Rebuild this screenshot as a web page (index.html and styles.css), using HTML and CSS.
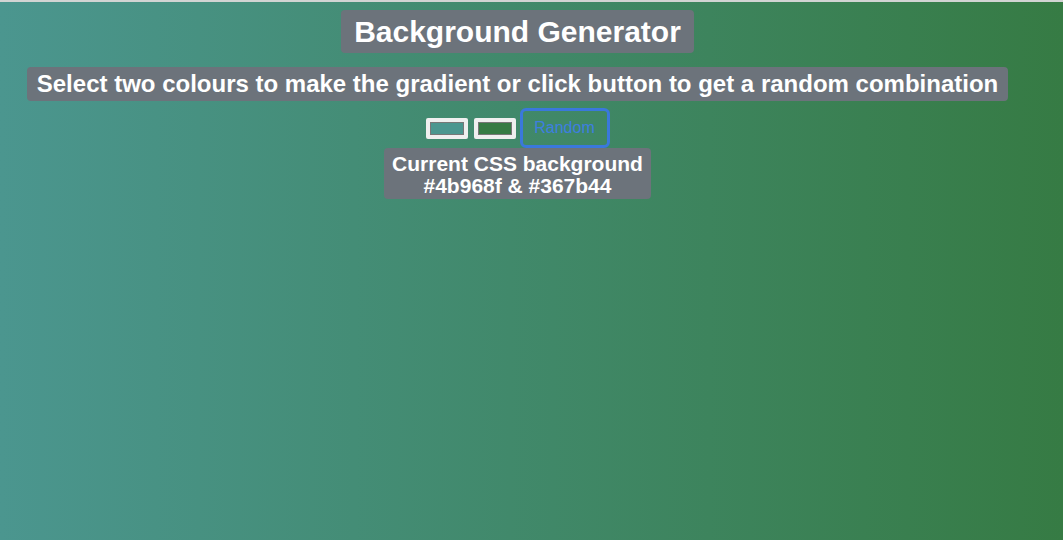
FILE: index.html
```html
<!DOCTYPE html>
<html>
<head>
<meta charset="utf-8">
<link rel="stylesheet" href="styles.css">
</head>
<body>
<div class="topbar"></div>
<main class="page">
  <h1 class="tag title">Background Generator</h1>
  <h3 class="tag subtitle">Select two colours to make the gradient or click button to get a random combination</h3>
  <div class="controls">
    <span class="picker"><span class="swatch swatch-a"></span></span>
    <span class="picker"><span class="swatch swatch-b"></span></span>
    <button class="random">Random</button>
  </div>
  <h3 class="tag current">Current CSS background<br>#4b968f &amp; #367b44</h3>
</main>
</body>
</html>
```
FILE: styles.css
```css
html, body {
  margin: 0;
  height: 100%;
}
body {
  background: linear-gradient(to right, #4b968f, #367b44);
  font-family: "Liberation Sans", Arial, sans-serif;
  overflow: hidden;
}
.topbar {
  height: 2px;
  background: #d2d4d3;
}
.page {
  width: 1035px;
  display: flex;
  flex-direction: column;
  align-items: center;
}
.tag {
  margin: 0;
  background: #6c737b;
  color: #fff;
  font-weight: bold;
  border-radius: 4px;
  text-align: center;
}
.title {
  margin-top: 8px;
  font-size: 30px;
  line-height: 35px;
  padding: 4px 13px;
}
.subtitle {
  margin-top: 14px;
  font-size: 24px;
  line-height: 28px;
  padding: 3px 10px;
}
.controls {
  margin-top: 7px;
  display: flex;
  align-items: center;
  gap: 6px;
  height: 40px;
}
.picker {
  display: block;
  width: 42px;
  height: 21px;
  box-sizing: border-box;
  padding: 4px;
  background: #efefef;
  border-radius: 2px;
}
.swatch {
  display: block;
  height: 100%;
  box-sizing: border-box;
  border: 1px solid #777;
}
.swatch-a { background: #4b968f; }
.swatch-b { background: #367b44; }
.random {
  margin-left: -2px;
  width: 90px;
  height: 40px;
  box-sizing: border-box;
  background: transparent;
  border: 3px solid #3a78dc;
  border-radius: 6px;
  color: #3d7ee0;
  font-family: "Liberation Sans", Arial, sans-serif;
  font-size: 16px;
  padding: 0;
}
.current {
  font-size: 21px;
  line-height: 22px;
  padding: 5px 8px 2px;
}
```
